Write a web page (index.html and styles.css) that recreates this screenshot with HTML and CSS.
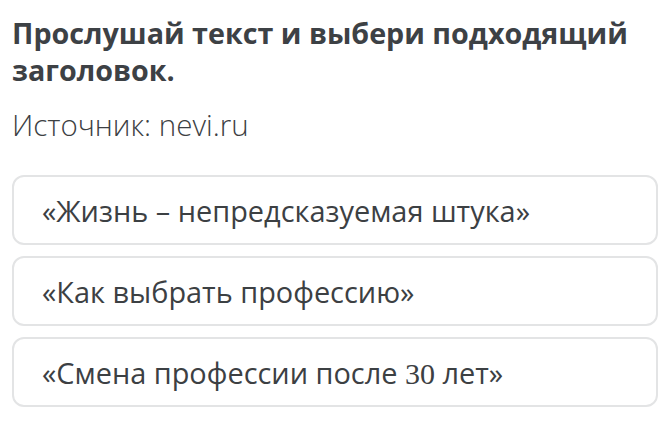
FILE: index.html
```html
<!DOCTYPE html>
<html lang="ru">
  <head>
    <meta charset="UTF-8" />
    <meta name="viewport" content="width=device-width, initial-scale=1.0" />
    <title>Задание</title>
    <link rel="stylesheet" href="styles.css">
  </head>
  <body>
    <div class="task">
      <h1 class="title">Прослушай текст и выбери подходящий заголовок.</h1>
      <p class="source">Источник: nevi.ru</p>
      <div class="options">
        <div class="option"><span>«Жизнь – непредсказуемая штука»</span></div>
        <div class="option"><span>«Как выбрать профессию»</span></div>
        <div class="option"><span>«Смена профессии после <span class="num">30</span> лет»</span></div>
      </div>
    </div>
  </body>
</html>
```

FILE: styles.css
```css
body {
  margin: 0;
  background-color: #ffffff;
  font-family: "Open Sans", "Noto Sans", sans-serif;
  color: #3c4043;
}
.task {
  padding: 14px 10px 0 12px;
}
.title {
  margin: 0;
  font-size: 28.7px;
  font-weight: 700;
  line-height: 37px;
  color: #3d4145;
}
.source {
  margin: 17px 0 0;
  font-size: 29.5px;
  font-weight: 300;
  line-height: 40px;
}
.options {
  display: flex;
  flex-direction: column;
  gap: 11px;
  margin-top: 30px;
}
.option {
  height: 66px;
  display: flex;
  align-items: center;
  padding: 0 28px;
  border: 2px solid #e3e4e5;
  border-radius: 12px;
  font-size: 28.9px;
  font-weight: 400;
}
.num {
  font-family: "Liberation Serif", serif;
  font-size: 30px;
}
```
